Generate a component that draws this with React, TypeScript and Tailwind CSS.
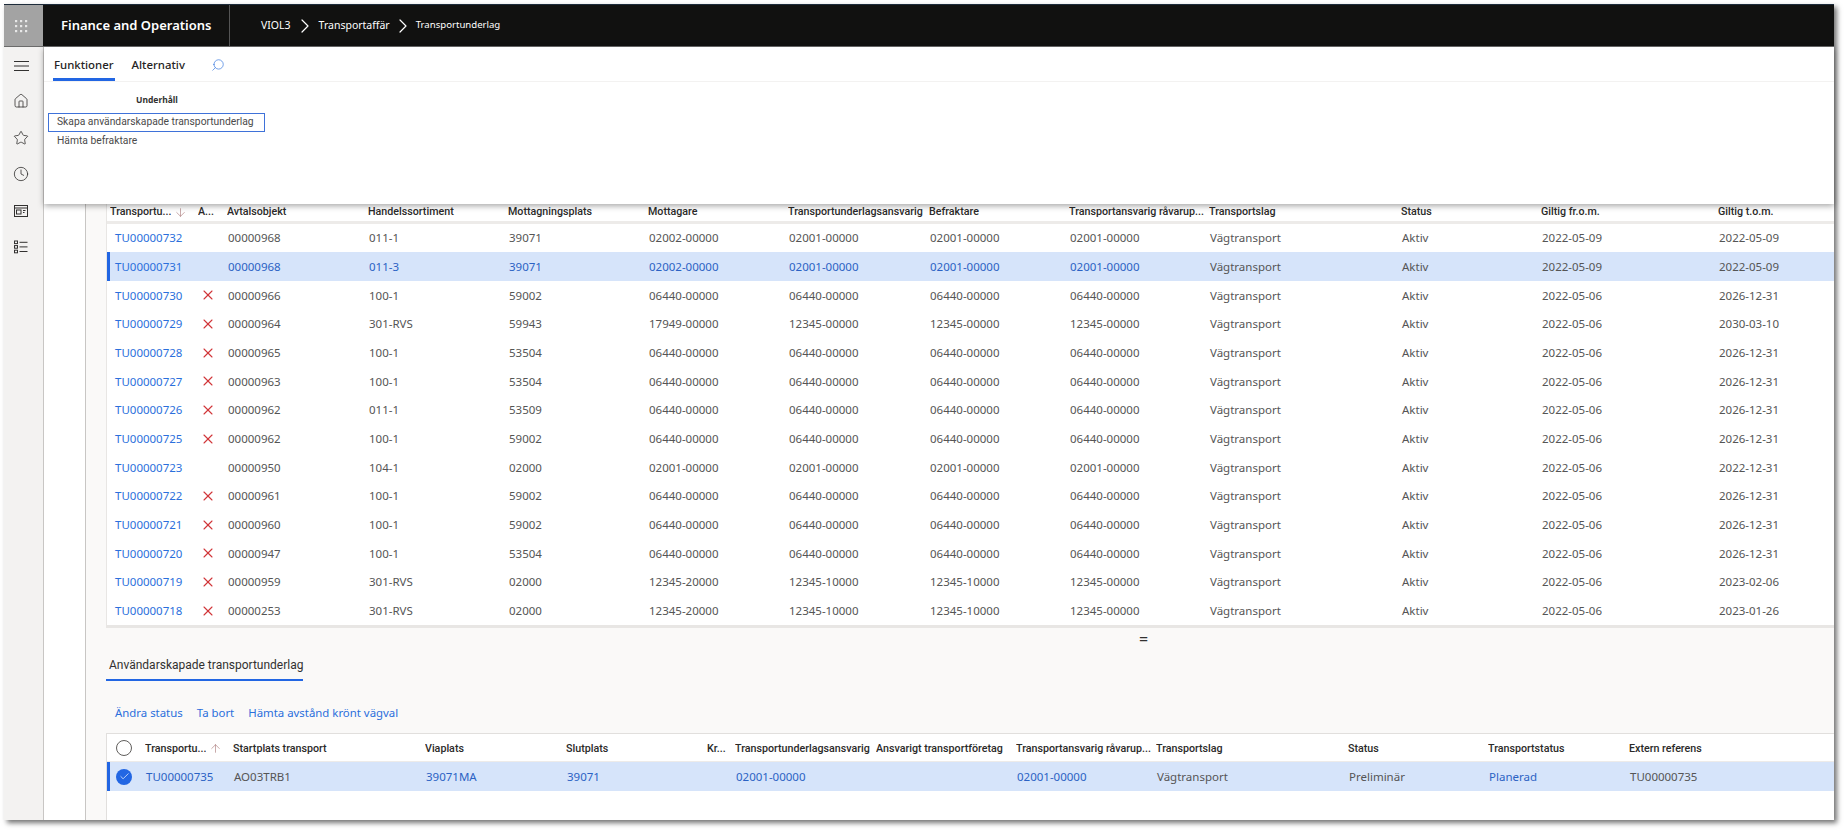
import React from "react";
import { ChevronRight, Home, Star, Clock, X, Search, ArrowDown, ArrowUp, Check } from "lucide-react";

type Row = { id: string; x: boolean; avt: string; han: string; mot: string; mg: string; tua: string; bef: string; tra: string; fr: string; to: string; sel?: boolean };
const r = (id: string, x: boolean, avt: string, han: string, mot: string, mg: string, tua: string, bef: string, tra: string, fr: string, to: string, sel = false): Row => ({ id, x, avt, han, mot, mg, tua, bef, tra, fr, to, sel });

const rows: Row[] = [
  r("TU00000732", false, "00000968", "011-1", "39071", "02002-00000", "02001-00000", "02001-00000", "02001-00000", "2022-05-09", "2022-05-09"),
  r("TU00000731", false, "00000968", "011-3", "39071", "02002-00000", "02001-00000", "02001-00000", "02001-00000", "2022-05-09", "2022-05-09", true),
  r("TU00000730", true, "00000966", "100-1", "59002", "06440-00000", "06440-00000", "06440-00000", "06440-00000", "2022-05-06", "2026-12-31"),
  r("TU00000729", true, "00000964", "301-RVS", "59943", "17949-00000", "12345-00000", "12345-00000", "12345-00000", "2022-05-06", "2030-03-10"),
  r("TU00000728", true, "00000965", "100-1", "53504", "06440-00000", "06440-00000", "06440-00000", "06440-00000", "2022-05-06", "2026-12-31"),
  r("TU00000727", true, "00000963", "100-1", "53504", "06440-00000", "06440-00000", "06440-00000", "06440-00000", "2022-05-06", "2026-12-31"),
  r("TU00000726", true, "00000962", "011-1", "53509", "06440-00000", "06440-00000", "06440-00000", "06440-00000", "2022-05-06", "2026-12-31"),
  r("TU00000725", true, "00000962", "100-1", "59002", "06440-00000", "06440-00000", "06440-00000", "06440-00000", "2022-05-06", "2026-12-31"),
  r("TU00000723", false, "00000950", "104-1", "02000", "02001-00000", "02001-00000", "02001-00000", "02001-00000", "2022-05-06", "2022-12-31"),
  r("TU00000722", true, "00000961", "100-1", "59002", "06440-00000", "06440-00000", "06440-00000", "06440-00000", "2022-05-06", "2026-12-31"),
  r("TU00000721", true, "00000960", "100-1", "59002", "06440-00000", "06440-00000", "06440-00000", "06440-00000", "2022-05-06", "2026-12-31"),
  r("TU00000720", true, "00000947", "100-1", "53504", "06440-00000", "06440-00000", "06440-00000", "06440-00000", "2022-05-06", "2026-12-31"),
  r("TU00000719", true, "00000959", "301-RVS", "02000", "12345-20000", "12345-10000", "12345-10000", "12345-00000", "2022-05-06", "2023-02-06"),
  r("TU00000718", true, "00000253", "301-RVS", "02000", "12345-20000", "12345-10000", "12345-10000", "12345-00000", "2022-05-06", "2023-01-26"),
];

const topCols = "grid grid-cols-[88px_29px_141px_140px_140px_140px_141px_140px_140px_192px_140px_177px_1fr]";
const botCols = "grid grid-cols-[35px_88px_192px_141px_141px_28px_141px_140px_140px_192px_140px_141px_1fr]";

const Waffle = () => (
  <svg width="14" height="14" viewBox="0 0 14 14" fill="#e8e8e8">
    {[1, 6, 11].map((y) => [1, 6, 11].map((x) => <rect key={`${x}-${y}`} x={x} y={y} width="2.2" height="2.2" />))}
  </svg>
);

const Hamburger = () => (
  <svg width="15" height="10" viewBox="0 0 15 10" stroke="#323130" strokeWidth="1">
    <path d="M0 .5h15M0 5h15M0 9.5h15" />
  </svg>
);

const Workspace = () => (
  <svg width="16" height="14" viewBox="0 0 16 14" fill="none" stroke="#323130" strokeWidth="1">
    <rect x="1.5" y="1.5" width="13" height="11" />
    <path d="M1.5 4h13" />
    <rect x="3.5" y="6" width="4.5" height="4" />
    <path d="M10 6.5h2.5M10 8.5h1.5" />
  </svg>
);

const ListIcon = () => (
  <svg width="16" height="14" viewBox="0 0 16 14" fill="none" stroke="#323130" strokeWidth="1">
    <rect x="1.5" y="1" width="3" height="2.6" />
    <rect x="1.5" y="5.6" width="3" height="2.6" />
    <rect x="1.5" y="10.2" width="3" height="2.6" />
    <path d="M6.5 2.3h8M6.5 6.9h8M6.5 11.5h8" />
  </svg>
);

const Link = ({ children, sel }: { children: React.ReactNode; sel?: boolean }) => (
  <span className={sel ? "text-[#2b62c4]" : "text-[#2b6fdc]"}>{children}</span>
);

const H = ({ children }: { children?: React.ReactNode }) => (
  <div className="truncate font-['Roboto',sans-serif] text-[10.7px] font-medium text-[#2b2a29]">{children}</div>
);

export default function App() {
  return (
    <div className="h-[834px] w-[1848px] overflow-hidden bg-white pl-[4px] pt-[4px] font-['Noto_Sans',sans-serif]">
      <div className="flex h-[816px] w-[1830px] flex-col border-t border-[#1d2b3a] shadow-[3px_3px_5px_rgba(0,0,0,0.55)]">
        {/* top bar */}
        <header className="flex h-[42px] shrink-0 items-center border-b border-[#6b6b6b] bg-[#111110] text-white">
          <div className="flex h-full w-[39px] items-center justify-center bg-[#a3a3a3] pr-[5px]">
            <Waffle />
          </div>
          <div className="flex h-full w-[187px] items-center border-r border-[#555] pl-[18px] text-[13px] font-semibold">
            Finance and Operations
          </div>
          <nav className="flex items-center pl-[31px] text-[10.5px]">
            <span>VIOL3</span>
            <ChevronRight className="mx-[2px] h-[24px] w-[24px]" strokeWidth={1.2} />
            <span>Transportaffär</span>
            <ChevronRight className="mx-[1px] h-[24px] w-[24px]" strokeWidth={1.2} />
            <span className="text-[9.6px]">Transportunderlag</span>
          </nav>
        </header>

        <div className="flex min-h-0 flex-1">
          {/* sidebar */}
          <aside className="flex w-[39px] shrink-0 flex-col items-center bg-[#f3f2f1] pr-[5px] pt-[14px]">
            <div className="flex h-[10px] items-center justify-center"><Hamburger /></div>
            <div className="mt-[22px] flex flex-col items-center gap-[20px] [&>*]:flex [&>*]:h-[16.5px] [&>*]:items-center">
              <div><Home className="h-[16px] w-[16px] text-[#323130]" strokeWidth={1.2} /></div>
              <div><Star className="h-[16px] w-[16px] text-[#323130]" strokeWidth={1.2} /></div>
              <div><Clock className="h-[16px] w-[16px] text-[#323130]" strokeWidth={1.2} /></div>
              <div><Workspace /></div>
              <div><ListIcon /></div>
            </div>
          </aside>

          {/* main */}
          <main className="relative flex min-w-0 flex-1 border-l border-[#c8c6c4]">
            {/* ribbon overlay */}
            <section className="absolute left-0 right-0 top-0 z-10 h-[157px] bg-white shadow-[0_2px_6px_rgba(0,0,0,0.35)]">
              <div className="flex h-[35px] items-end border-b border-[#f3f2f1] pl-[9px] text-[11.4px]">
                <div className="flex h-[35px] items-center border-b-[3px] border-[#2266e3] px-[1px] pt-[6px] font-medium text-[#252423]">Funktioner</div>
                <div className="ml-[17px] flex h-[35px] items-center pt-[3px] font-medium text-[#252423]">Alternativ</div>
                <div className="ml-[26px] flex h-[35px] items-center pt-[3px]">
                  <Search className="h-[14px] w-[14px] -scale-x-100 text-[#2b6fdc]" strokeWidth={1.1} />
                </div>
              </div>
              <div className="pl-[4px] pt-[12px] font-['Roboto',sans-serif] text-[10.3px] text-[#4a4a4a]">
                <div className="pl-[88px] font-['Noto_Sans',sans-serif] text-[8.5px] font-bold leading-[12px] text-[#323130]">Underhåll</div>
                <div className="mt-[7px] flex h-[19px] w-[217px] items-center whitespace-nowrap border-[1.5px] border-[#3f72d9] pl-[8px] leading-none">Skapa användarskapade transportunderlag</div>
                <div className="flex h-[19px] items-center whitespace-nowrap pl-[9px] leading-none">Hämta befraktare</div>
              </div>
            </section>

            <div className="w-[42px] shrink-0 border-r border-[#c8c6c4] bg-white" />

            <div className="flex min-w-0 flex-1 flex-col bg-[#faf9f8] pl-[20px]">
              <div className="h-[157px] shrink-0" />

              {/* upper grid */}
              <div className="shrink-0 border-b-[3px] border-l border-[#e8e6e4] bg-white">
                <div className={`${topCols} h-[19.5px] items-center border-b-[3px] border-[#edebe9] pb-[3px] pl-[3px]`}>
                  <div className="flex items-center">
                    <span className="truncate font-['Roboto',sans-serif] text-[10.7px] font-medium text-[#2b2a29]">Transportu...</span>
                    <ArrowDown className="ml-[3px] h-[13px] w-[13px] shrink-0 text-[#9a6060]" strokeWidth={1} />
                  </div>
                  <H>A...</H>
                  <H>Avtalsobjekt</H>
                  <H>Handelssortiment</H>
                  <H>Mottagningsplats</H>
                  <H>Mottagare</H>
                  <H>Transportunderlagsansvarig</H>
                  <H>Befraktare</H>
                  <H>Transportansvarig råvarup...</H>
                  <H>Transportslag</H>
                  <H>Status</H>
                  <H>Giltig fr.o.m.</H>
                  <H>Giltig t.o.m.</H>
                </div>
                {rows.map((row) => (
                  <div
                    key={row.id}
                    className={`${topCols} h-[28.7px] items-center border-l-[3px] pl-0 text-[11.5px] text-[#555] ${row.sel ? "border-[#2266e3] bg-[#d6e4fa]" : "border-transparent"}`}
                  >
                    <div className="pl-[5px] text-[#2b6fdc]">{row.id}</div>
                    <div className="pl-[2px]">{row.x && <X className="h-[16px] w-[16px] text-[#d13438]" strokeWidth={1.6} />}</div>
                    <div className="pl-[1px]">{row.sel ? <Link sel>{row.avt}</Link> : row.avt}</div>
                    <div className="pl-[1px]">{row.sel ? <Link sel>{row.han}</Link> : row.han}</div>
                    <div className="pl-[1px]">{row.sel ? <Link sel>{row.mot}</Link> : row.mot}</div>
                    <div className="pl-[1px]">{row.sel ? <Link sel>{row.mg}</Link> : row.mg}</div>
                    <div className="pl-[1px]">{row.sel ? <Link sel>{row.tua}</Link> : row.tua}</div>
                    <div className="pl-[1px]">{row.sel ? <Link sel>{row.bef}</Link> : row.bef}</div>
                    <div className="pl-[1px]">{row.sel ? <Link sel>{row.tra}</Link> : row.tra}</div>
                    <div className="pl-[1px]">Vägtransport</div>
                    <div className="pl-[1px]">Aktiv</div>
                    <div className="pl-[1px]">{row.fr}</div>
                    <div className="pl-[1px]">{row.to}</div>
                  </div>
                ))}
              </div>

              {/* splitter */}
              <div className="flex h-[22px] shrink-0 items-center pl-[1033px] text-[16px] leading-none text-[#323130]">=</div>

              {/* tab */}
              <div className="mt-[7px] shrink-0 self-start border-b-2 border-[#2266e3] pb-[5px] pl-[3px] font-['Roboto',sans-serif] text-[12px] leading-[17px] text-[#323130]">
                Användarskapade transportunderlag
              </div>

              {/* actions */}
              <div className="mt-[21px] flex h-[20px] shrink-0 items-center gap-[14px] pl-[9px] text-[11.4px] text-[#2b6fdc]">
                <span>Ändra status</span>
                <span>Ta bort</span>
                <span>Hämta avstånd krönt vägval</span>
              </div>

              {/* lower grid */}
              <div className="mt-[11px] flex min-h-0 flex-1 flex-col border-l border-t border-[#e1dfdd] bg-white">
                <div className={`${botCols} h-[28px] shrink-0 items-center border-b border-[#edebe9] pl-[3px]`}>
                  <div className="pl-[6px]"><div className="h-[16px] w-[16px] rounded-full border border-[#605e5c]" /></div>
                  <div className="flex items-center pt-[2px]">
                    <span className="truncate font-['Roboto',sans-serif] text-[10.7px] font-medium text-[#2b2a29]">Transportu...</span>
                    <ArrowUp className="ml-[3px] h-[13px] w-[13px] shrink-0 text-[#9a6060]" strokeWidth={1} />
                  </div>
                  {["Startplats transport", "Viaplats", "Slutplats", "Kr...", "Transportunderlagsansvarig", "Ansvarigt transportföretag", "Transportansvarig råvarup...", "Transportslag", "Status", "Transportstatus", "Extern referens"].map((t) => (
                    <div key={t} className="pt-[2px]"><H>{t}</H></div>
                  ))}
                </div>
                <div className={`${botCols} h-[29px] shrink-0 items-center border-l-[3px] border-[#2266e3] bg-[#d6e4fa] text-[11.5px] text-[#555]`}>
                  <div className="pl-[6px]">
                    <div className="flex h-[16px] w-[16px] items-center justify-center rounded-full bg-[#2266e3]">
                      <Check className="h-[11px] w-[11px] text-white" strokeWidth={1.5} />
                    </div>
                  </div>
                  <div className="pl-[1px]"><Link sel>TU00000735</Link></div>
                  <div className="pl-[1px]">AO03TRB1</div>
                  <div className="pl-[1px]"><Link sel>39071MA</Link></div>
                  <div className="pl-[1px]"><Link sel>39071</Link></div>
                  <div />
                  <div className="pl-[1px]"><Link sel>02001-00000</Link></div>
                  <div />
                  <div className="pl-[1px]"><Link sel>02001-00000</Link></div>
                  <div className="pl-[1px]">Vägtransport</div>
                  <div className="pl-[1px]">Preliminär</div>
                  <div className="pl-[1px]"><Link sel>Planerad</Link></div>
                  <div className="pl-[1px]">TU00000735</div>
                </div>
              </div>
            </div>
          </main>
        </div>
      </div>
    </div>
  );
}
